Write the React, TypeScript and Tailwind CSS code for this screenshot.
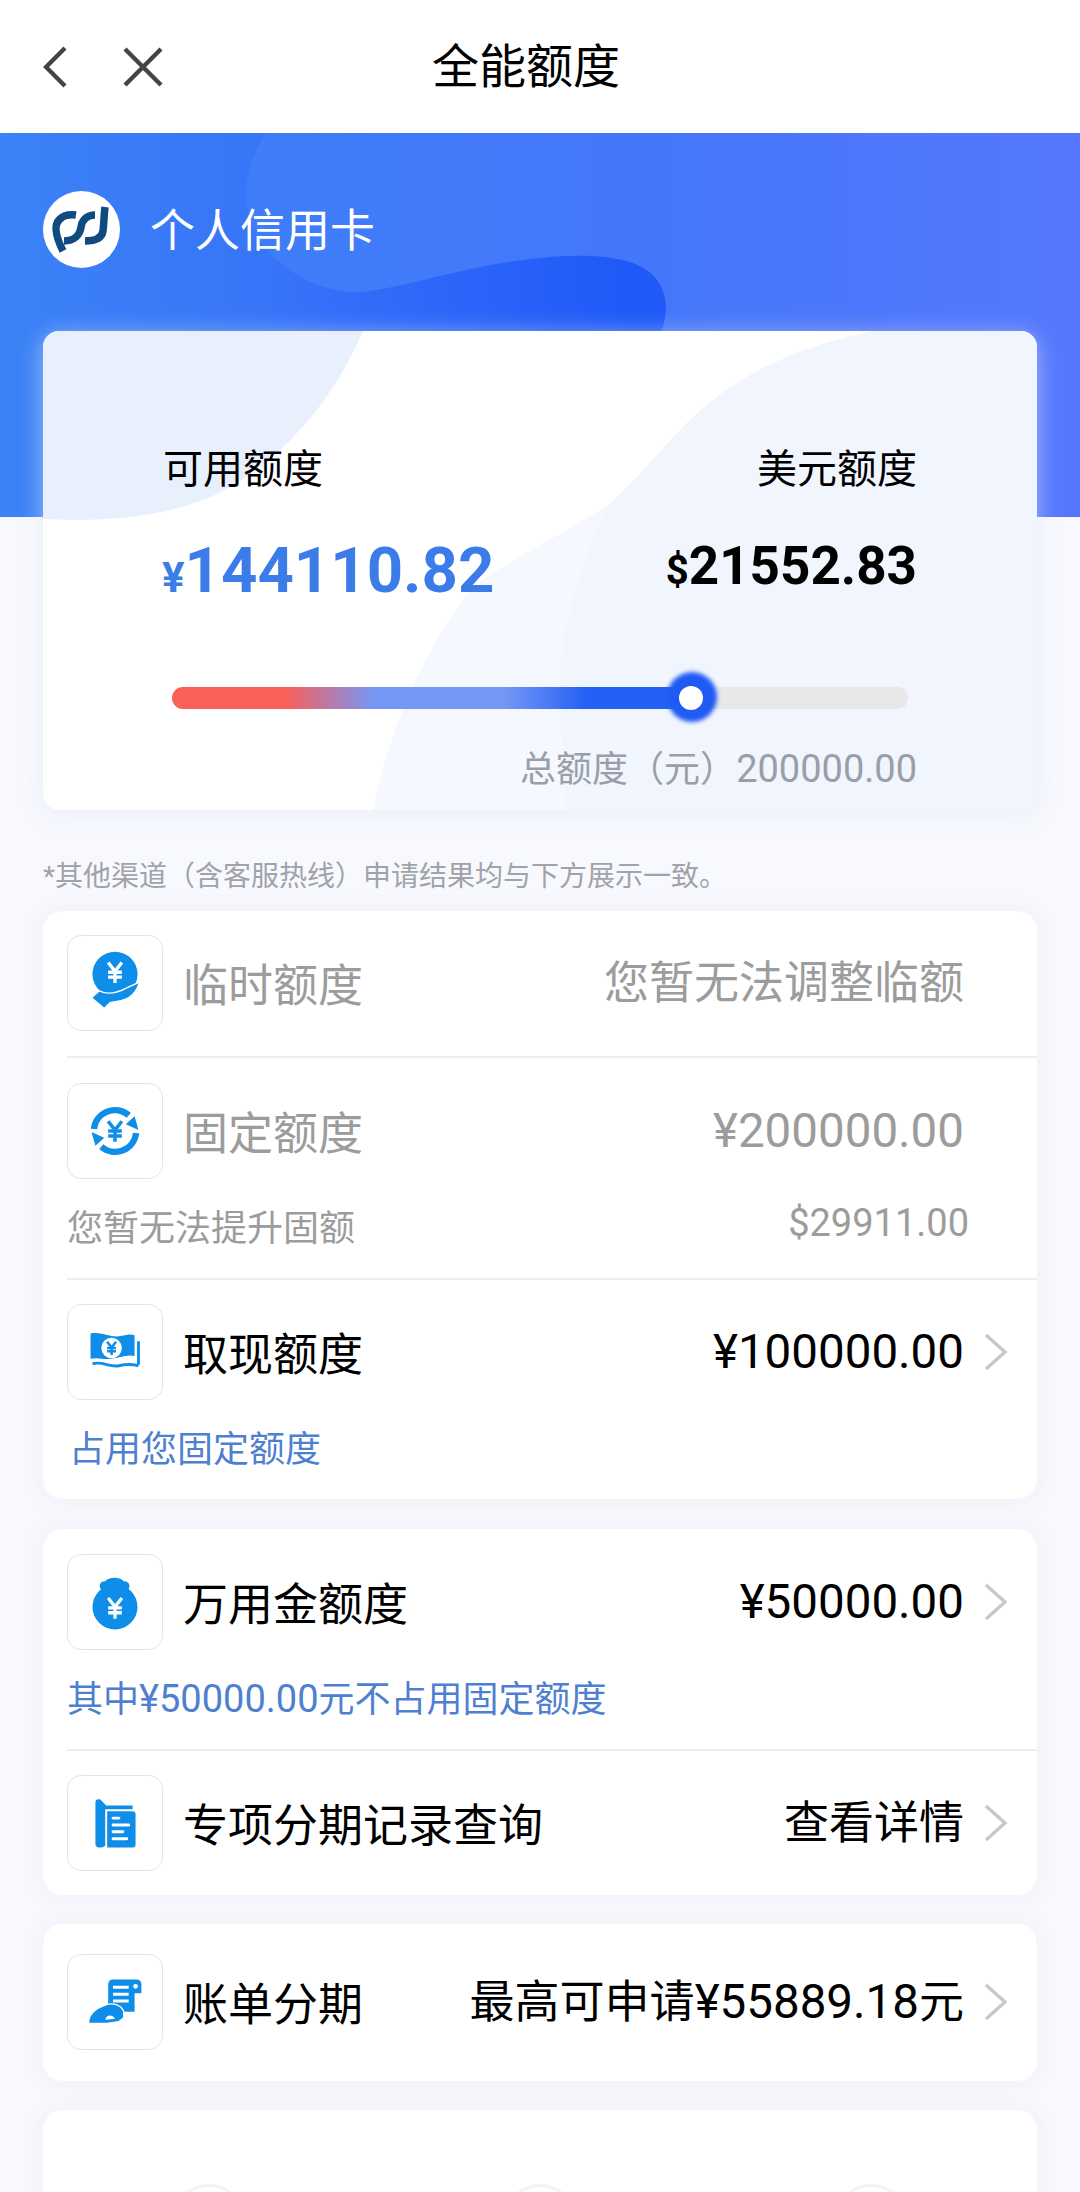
import React from 'react';

const Yen = ({ x, y, s = 1, color = '#fff', w = 3.4 }: { x: number; y: number; s?: number; color?: string; w?: number }) => (
  <g transform={`translate(${x} ${y}) scale(${s})`} stroke={color} strokeWidth={w} fill="none">
    <path d="M-7 -10 L0 -1 L7 -10" />
    <path d="M-7 0 H7 M-7 5 H7 M0 -1 V11" />
  </g>
);

const IconHand = () => (
  <svg viewBox="0 0 96 96" className="w-[96px] h-[96px]">
    <circle cx="48" cy="39" r="23" fill="#0f8ee9" />
    <Yen x={48} y={37} />
    <path d="M24 63 L32 56 C40 60 50 58 58 54 C64 51 68 49 73 47 C71 56 64 64 54 66 L43 68 L37 74 Z" fill="#0f8ee9" stroke="#fff" strokeWidth="1.4" />
  </svg>
);

const IconRefresh = () => (
  <svg viewBox="0 0 96 96" className="w-[96px] h-[96px]">
    <g fill="none" stroke="#0f8ee9" strokeWidth="6.5">
      <path d="M26.5 46 A21.5 21.5 0 0 1 62 32" />
      <path d="M69.5 50 A21.5 21.5 0 0 1 34 64" />
    </g>
    <path d="M59 41 L68 33 L72 47 Z" fill="#0f8ee9" />
    <path d="M37 55 L28 63 L24 49 Z" fill="#0f8ee9" />
    <Yen x={48} y={48} color="#0f8ee9" w={3.6} />
  </svg>
);

const IconMoney = () => (
  <svg viewBox="0 0 96 96" className="w-[96px] h-[96px]">
    <path d="M23 29 C34 27 42 33 52 32 C58 31 63 29 68 31 V52 C60 50 52 54 44 55 C36 56 30 53 23 55 Z" fill="#0f8ee9" />
    <circle cx="44.5" cy="44" r="10.5" fill="#fff" />
    <Yen x={44.5} y={44} s={0.65} color="#0f8ee9" w={4} />
    <path d="M72 37 V61" stroke="#0f8ee9" strokeWidth="3" />
    <path d="M25 60 C36 57 42 64 52 62 C60 60 64 60 72 62" stroke="#0f8ee9" strokeWidth="3" fill="none" />
  </svg>
);

const IconBag = () => (
  <svg viewBox="0 0 96 96" className="w-[96px] h-[96px]">
    <circle cx="48" cy="53" r="23" fill="#0f8ee9" />
    <path d="M38 38 C30 36 31 26 38 27 C41 22 54 22 57 27 C64 26 65 36 58 38 Z" fill="#0f8ee9" />
    <Yen x={48} y={54} />
  </svg>
);

const IconFolder = () => (
  <svg viewBox="0 0 96 96" className="w-[96px] h-[96px]">
    <path d="M28 27 C28 24 30 23 33 24 L39 30 H66 V34 H38 V71 C36 74 28 74 28 70 Z" fill="#0f8ee9" />
    <path d="M40 36 H66 C68 36 69 37 69 39 V70 C69 72 68 73 66 73 H40 Z" fill="#0f8ee9" />
    <path d="M46 43 H52 M46 50 H62 M46 57 H56 M46 64 H60" stroke="#fff" strokeWidth="3" strokeLinecap="round" />
  </svg>
);

const IconBill = () => (
  <svg viewBox="0 0 96 96" className="w-[96px] h-[96px]">
    <path d="M41 58 V30 C41 27 43 25 46 25 H70 C73 25 75 27 75 30 V39 H68 V58 Z" fill="#0f8ee9" />
    <path d="M46 33 H62 M46 40 H62 M46 47 H62" stroke="#fff" strokeWidth="3" />
    <circle cx="69" cy="32" r="2.4" fill="#fff" />
    <path d="M21 70 C21 60 28 55 36 52 C44 48 54 50 57 58 V64 L52 68 L40 70 Z" fill="#0f8ee9" stroke="#fff" strokeWidth="1.4" />
    <path d="M38 66 C39 61 45 60 48 65 Z" fill="#fff" />
  </svg>
);

const IconBox = ({ children }: { children: React.ReactNode }) => (
  <div className="w-[96px] h-[96px] shrink-0 rounded-[14px] border border-[#e4e4e4] bg-white overflow-hidden flex items-center justify-center">
    {children}
  </div>
);

const Chevron = () => (
  <svg viewBox="0 0 24 38" className="w-[24px] h-[38px]" fill="none" stroke="#c8c8c8" strokeWidth="3.4">
    <path d="M2 2 L21 19 L2 36" />
  </svg>
);

type RowProps = {
  icon: React.ReactNode;
  label: string;
  value: React.ReactNode;
  gray?: boolean;
  arrow?: boolean;
};

const Row = ({ icon, label, value, gray, arrow }: RowProps) => (
  <div className="flex items-center h-[96px] pl-[24px] pr-[29px]">
    <IconBox>{icon}</IconBox>
    <span className={`ml-[20px] text-[45px] leading-[56px] mt-[8px] ${gray ? 'text-[#9c9c9c]' : 'text-black'}`}>{label}</span>
    <span className={`ml-auto text-[47.5px] leading-[56px] ${gray ? 'text-[#9c9c9c]' : 'text-black'}`}>{value}</span>
    <div className="w-[44px] flex justify-end">{arrow && <Chevron />}</div>
  </div>
);

const Cjk = ({ children }: { children: React.ReactNode }) => <span className="text-[45px]">{children}</span>;

const SubText = ({ children }: { children: React.ReactNode }) => (
  <div className="h-[99px] flex items-center pl-[24px] text-[36px] text-[#4f7fd0]">{children}</div>
);

const Divider = () => <div className="h-[2px] ml-[24px] bg-[#ededed]" />;

const Card = ({ children, className }: { children: React.ReactNode; className: string }) => (
  <div className={`mx-[43px] bg-white rounded-[20px] shadow-[0_0_24px_rgba(40,60,110,0.05)] ${className}`}>{children}</div>
);

export default function App() {
  return (
    <div
      className="relative w-[1080px] h-[2192px] overflow-hidden bg-[#f8f9fe] text-black"
      style={{ fontFamily: "Roboto, 'Noto Sans CJK SC', sans-serif" }}
    >
      {/* top bar */}
      <div className="h-[133px] bg-white flex items-center pl-[43px]">
        <svg viewBox="0 0 24 42" className="w-[24px] h-[42px]" fill="none" stroke="#444" strokeWidth="4.4">
          <path d="M22 2 L3 21 L22 40" />
        </svg>
        <svg viewBox="0 0 40 40" className="ml-[56px] w-[40px] h-[40px]" fill="none" stroke="#444" strokeWidth="4.4">
          <path d="M2 2 L38 38 M38 2 L2 38" />
        </svg>
        <span className="ml-[269px] text-[47px] leading-[60px]">全能额度</span>
      </div>

      {/* blue banner */}
      <div className="relative h-[384px] bg-[linear-gradient(90deg,#3b82f6,#4477fb_60%,#5577fd)] overflow-hidden">
        <svg viewBox="0 0 1080 384" className="absolute inset-0 w-[1080px] h-[384px]">
          <defs>
            <linearGradient id="blob" x1="0" y1="0" x2="660" y2="0" gradientUnits="userSpaceOnUse">
              <stop offset="0" stopColor="#1f5af8" stopOpacity="0" />
              <stop offset="0.38" stopColor="#1f5af8" stopOpacity="0.22" />
              <stop offset="0.62" stopColor="#1f5af8" stopOpacity="0.55" />
              <stop offset="0.95" stopColor="#1f5af8" stopOpacity="1" />
            </linearGradient>
          </defs>
          <path
            d="M266 0 C240 40 236 90 275 125 C300 148 330 160 360 159 C400 156 460 134 530 126 C590 119 640 122 658 148 C668 164 668 180 661 200 L0 200 L0 0 Z"
            fill="url(#blob)"
          />
        </svg>
        <div className="relative flex items-center pt-[58px] pl-[43px]">
          <svg viewBox="0 0 77 77" className="w-[77px] h-[77px]">
            <circle cx="38.5" cy="38.5" r="38.5" fill="#fff" />
            <g fill="none" stroke="#0f4a80" strokeWidth="7.5">
              <path d="M20 60 C12 44 11 33 17 28 C21 24 26 23 33 24" />
              <path d="M52 24 C43 24 39 30 38 36 C37 44 31 50 21 50" />
              <path d="M42 50 C52 50 59 47 60 40 C61 32 61 24 62 16" />
            </g>
          </svg>
          <span className="ml-[30px] mt-[4px] text-[45px] leading-[56px] text-white">个人信用卡</span>
        </div>
      </div>

      {/* quota card */}
      <div className="relative mx-[43px] -mt-[186px] h-[479px] rounded-[16px] bg-white overflow-hidden shadow-[0_4px_24px_rgba(225,230,245,0.6)]">
        <svg viewBox="0 0 994 479" className="absolute inset-0 w-[994px] h-[479px]">
          <path d="M0 0 H320 C290 70 240 130 170 165 C110 190 50 190 0 188 Z" fill="#e8f0fd" />
          <path d="M600 150 C540 195 470 225 430 256 C385 310 345 400 330 479 H994 V150 Z" fill="#f5f8fe" />
          <path
            d="M994 0 H830 C760 15 690 40 630 106 C600 140 585 155 564 176 C535 240 515 310 517 356 C518 400 520 440 524 479 H994 Z"
            fill="#f1f5fd"
          />
        </svg>
        <div className="relative">
          <div className="flex justify-between pl-[119px] pr-[120px] pt-[115px]">
            <div className="flex flex-col items-start">
              <span className="ml-[1px] text-[40px] leading-[48px]">可用额度</span>
              <span className="mt-[45px] text-[63.5px] leading-[64px] font-bold text-[#3b7ce8]">
                <span className="text-[42px]">¥</span>144110.82
              </span>
            </div>
            <div className="flex flex-col items-end">
              <span className="text-[40px] leading-[48px]">美元额度</span>
              <span className="mt-[40px] text-[53px] leading-[64px] font-bold">
                <span className="text-[40px]">$</span>21552.83
              </span>
            </div>
          </div>
          <div className="relative ml-[129px] mr-[129px] mt-[77px] h-[22px] rounded-full bg-[#e8e8e8]">
            <div className="h-full w-[519px] rounded-l-full bg-[linear-gradient(90deg,#f9605a_0%,#f9605a_22%,#7597f5_39%,#7597f5_64%,#2360f5_80%)]" />
            <div className="absolute left-[495px] -top-[15px] w-[50px] h-[50px] rounded-full bg-[#1f5af5] blur-[2px]" />
            <div className="absolute left-[507px] -top-[1px] w-[24px] h-[24px] rounded-full bg-white" />
          </div>
          <div className="mt-[36px] pr-[120px] text-right text-[36px] leading-[48px] text-[#9b9ea6]">
            总额度（元）<span className="text-[38px]">200000.00</span>
          </div>
        </div>
      </div>

      <div className="mt-[47px] pl-[43px] text-[28px] leading-[40px] text-[#a0a3a9]">*其他渠道（含客服热线）申请结果均与下方展示一致。</div>

      <Card className="mt-[14px] pt-[24px]">
        <Row icon={<IconHand />} label="临时额度" value={<Cjk>您暂无法调整临额</Cjk>} gray />
        <div className="h-[25px]" />
        <Divider />
        <div className="h-[25px]" />
        <Row icon={<IconRefresh />} label="固定额度" value="¥200000.00" gray />
        <div className="h-[99px] flex items-center justify-between pl-[24px] pr-[68px] text-[#9c9c9c]">
          <span className="text-[36px]">您暂无法提升固额</span>
          <span className="text-[38px] -mt-[10px]">$29911.00</span>
        </div>
        <Divider />
        <div className="h-[24px]" />
        <Row icon={<IconMoney />} label="取现额度" value="¥100000.00" arrow />
        <SubText>
          <span className="ml-[2px]">占用您固定额度</span>
        </SubText>
      </Card>

      <Card className="mt-[30px] pt-[25px] pb-[24px]">
        <Row icon={<IconBag />} label="万用金额度" value="¥50000.00" arrow />
        <SubText>
          其中<span className="text-[38px]">¥50000.00</span>元不占用固定额度
        </SubText>
        <Divider />
        <div className="h-[24px]" />
        <Row icon={<IconFolder />} label="专项分期记录查询" value={<Cjk>查看详情</Cjk>} arrow />
      </Card>

      <Card className="mt-[29px] pt-[30px] pb-[31px]">
        <Row
          icon={<IconBill />}
          label="账单分期"
          value={
            <>
              <Cjk>最高可申请</Cjk>¥55889.18<Cjk>元</Cjk>
            </>
          }
          arrow
        />
      </Card>

      <Card className="mt-[29px] h-[300px]">
        <div className="grid grid-cols-3 pt-[74px]">
          <div className="mx-auto w-[72px] h-[72px] rounded-full border-[3px] border-[#f4f4f4]" />
          <div className="mx-auto w-[72px] h-[72px] rounded-full border-[3px] border-[#f4f4f4]" />
          <div className="mx-auto w-[72px] h-[72px] rounded-full border-[3px] border-[#f4f4f4]" />
        </div>
      </Card>
    </div>
  );
}
